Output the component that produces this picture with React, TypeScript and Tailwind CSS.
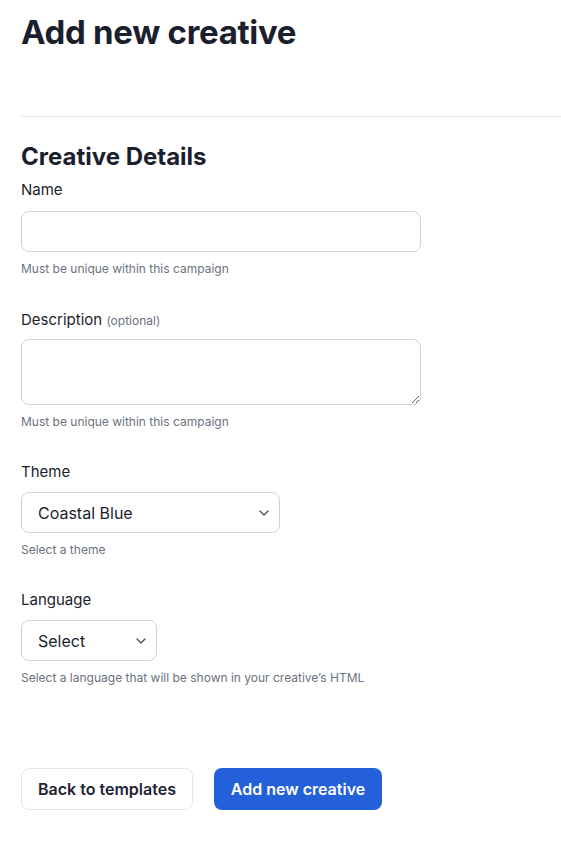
import { ChevronDown } from "lucide-react";

const helper = "mt-[9px] text-xs leading-4 text-[#6b7280]";
const label = "block text-[15px] leading-5 text-[#1b1e2c]";
const field = "block w-[400px] rounded-lg border border-[#cdd3e0] px-3 outline-none";
const select =
  "flex h-[41px] items-center justify-between rounded-lg border border-[#cdd3e0] pr-[7px] pl-[16px]";

export default function App() {
  return (
    <div
      className="min-h-[841px] w-[561px] bg-white pl-[21px] text-[#1b1e2c]"
      style={{ fontFamily: "Inter, 'Noto Sans', sans-serif" }}
    >
      <h1 className="pt-[12px] text-[33px] leading-[40px] font-bold tracking-[-0.3px]">Add new creative</h1>
      <div className="mt-[64px] h-px bg-[#e3e7ee]" />

      <div className="w-[400px] pt-[25px]">
        <h2 className="text-[24px] leading-[30px] font-bold">Creative Details</h2>

        <div className="mt-[8px]">
          <label className={label}>Name</label>
          <input className={`mt-[11px] h-[41px] ${field}`} />
          <p className={helper}>Must be unique within this campaign</p>
        </div>

        <div className="mt-[33px]">
          <label className={label}>
            Description <span className="text-xs text-[#6b7280]">(optional)</span>
          </label>
          <textarea className={`mt-[9px] h-[66px] ${field}`} />
          <p className={helper}>Must be unique within this campaign</p>
        </div>

        <div className="mt-[32px]">
          <label className={label}>Theme</label>
          <div className={`mt-[10px] w-[259px] ${select}`}>
            <span className="text-base text-[#1b1e2c]">Coastal Blue</span>
            <ChevronDown className="h-4 w-4 text-[#4b5563]" strokeWidth={2} />
          </div>
          <p className={helper}>Select a theme</p>
        </div>

        <div className="mt-[32px]">
          <label className={label}>Language</label>
          <div className={`mt-[10px] w-[136px] ${select}`}>
            <span className="text-base text-[#1b1e2c]">Select</span>
            <ChevronDown className="h-4 w-4 text-[#4b5563]" strokeWidth={2} />
          </div>
          <p className={helper}>Select a language that will be shown in your creative’s HTML</p>
        </div>
      </div>

      <div className="mt-[82px] flex gap-[21px]">
        <button className="h-[42px] w-[172px] rounded-lg border border-[#e2e6ee] text-base font-semibold text-[#1f2433]">
          Back to templates
        </button>
        <button className="h-[42px] w-[168px] rounded-lg bg-[#2360d9] text-base font-semibold text-white">
          Add new creative
        </button>
      </div>
    </div>
  );
}
